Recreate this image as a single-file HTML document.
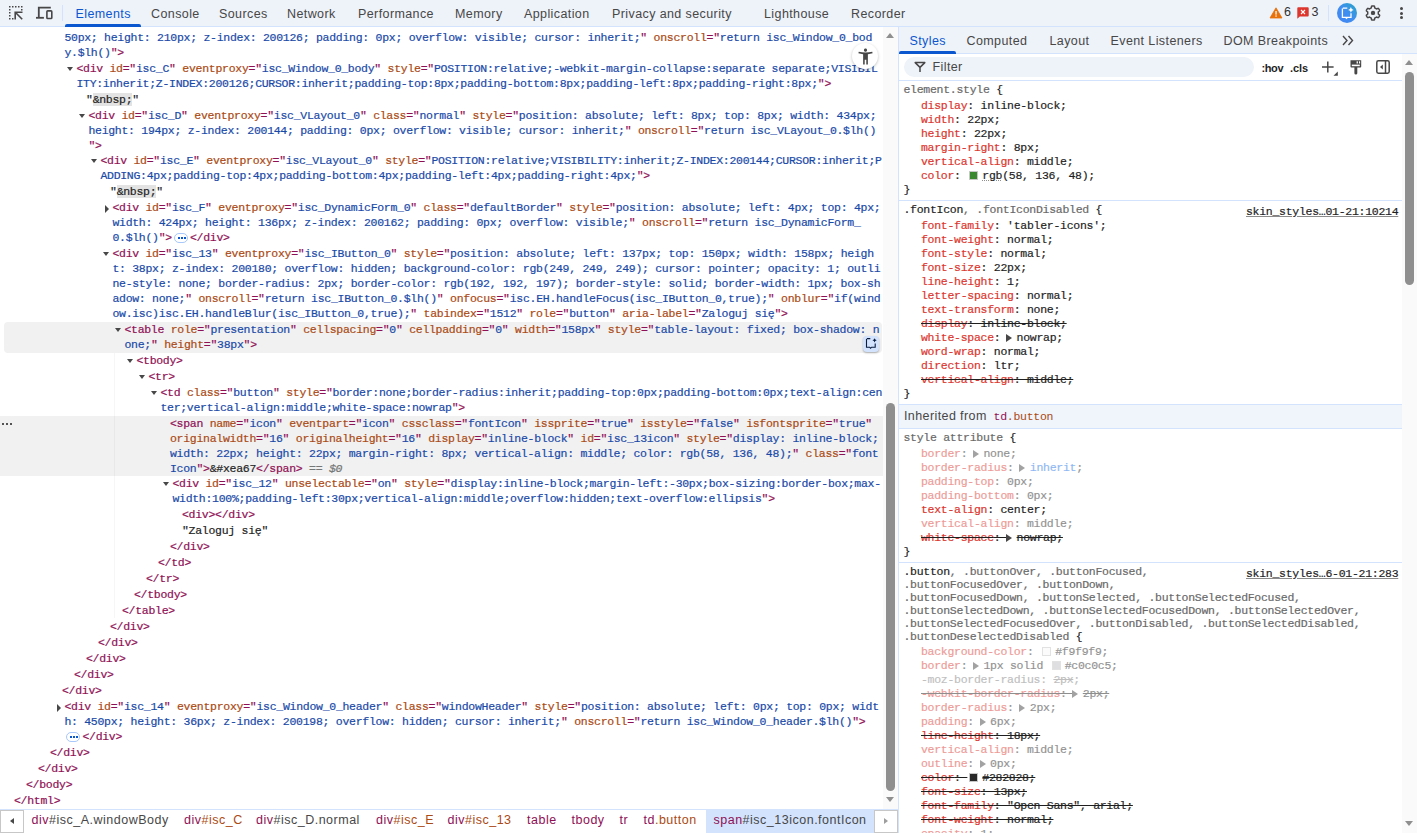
<!DOCTYPE html>
<html><head><meta charset="utf-8"><title>DevTools</title><style>
*{box-sizing:border-box}
html,body{margin:0;padding:0}
body{width:1417px;height:833px;overflow:hidden;position:relative;background:#fff;font-family:"Liberation Sans", sans-serif;color:#1f1f1f}
.abs{position:absolute}
#tb{position:absolute;left:0;top:0;width:1417px;height:27px;background:#eef2f9;border-bottom:1px solid #d3e3fd}
.tab{position:absolute;top:6px;font-size:12.5px;line-height:15px;color:#474747;white-space:nowrap;letter-spacing:0.4px}
#el{position:absolute;left:0;top:27px;width:898px;height:782px;background:#fff;overflow:hidden}
#dom{position:absolute;left:0;top:-27px;width:883px;height:809px}
.ln{position:absolute;white-space:pre;font-family:"Liberation Mono", monospace;font-size:11.5px;line-height:15px;letter-spacing:-0.281px;-webkit-text-stroke:0.2px currentColor}
.t{color:#8f0f55} .a{color:#ab4a14} .v{color:#1a4aa8} .x{color:#1f1f1f}
.nb{background:#e3e3e3;color:#1f1f1f}
.eq{color:#747775} .i{font-style:italic}
.rowbg{position:absolute;left:0;width:883px}
.hov{background:#f1f1f1} .sel{background:#f1f1f1}
.tri-d{position:absolute;width:0;height:0;border-left:3.8px solid transparent;border-right:3.8px solid transparent;border-top:4.8px solid #474747}
.tri-r{position:absolute;width:0;height:0;border-top:4px solid transparent;border-bottom:4px solid transparent;border-left:4.5px solid #474747}
.dots{position:absolute;left:2px;height:2px}
.dots i{position:absolute;top:0;width:2px;height:2px;background:#1f1f1f;border-radius:1px}
.dots i:nth-child(1){left:0} .dots i:nth-child(2){left:4px} .dots i:nth-child(3){left:8px}
.badge{display:inline-block;position:relative;width:14px;height:10px;border:1px solid #a8c7fa;border-radius:5px;vertical-align:-2px;margin:0 2px 0 2px;background:#fff}
.badge b{position:absolute;left:3px;top:3px;width:2px;height:2px;background:#0b57d0;box-shadow:3px 0 0 #0b57d0,6px 0 0 #0b57d0}
#vs{position:absolute;left:883px;top:27px;width:15px;height:782px;background:#fafafa}
.thumb{position:absolute;background:#8f8f8f;border-radius:4.5px}
.arr-u{position:absolute;width:0;height:0;border-left:4.7px solid transparent;border-right:4.7px solid transparent;border-bottom:5px solid #8f8f8f}
.arr-d{position:absolute;width:0;height:0;border-left:4.7px solid transparent;border-right:4.7px solid transparent;border-top:5px solid #8f8f8f}
#bc{position:absolute;left:0;top:809px;width:898px;height:24px;background:#fff;border-top:1px solid #d3e3fd}
.crumb{position:absolute;top:3px;font-size:12.5px;line-height:15px;white-space:nowrap;color:#474747;letter-spacing:0.5px}
#sb{position:absolute;left:898px;top:27px;width:519px;height:806px;border-left:1px solid #d3e3fd;background:#fff}
.ss{position:absolute;white-space:pre;font-family:"Liberation Mono", monospace;font-size:11.5px;line-height:14px;letter-spacing:-0.281px;-webkit-text-stroke:0.2px currentColor;color:#1f1f1f}
.pn{color:#dc362e} .sel-g{color:#5f6368}
.fade{opacity:.5}
.strike{text-decoration:line-through}

.arrow{display:inline-block;width:0;height:0;border-top:4px solid transparent;border-bottom:4px solid transparent;border-left:6.5px solid #474747;margin:0 4.5px 0 -1px;vertical-align:-0.5px}
.sw{display:inline-block;width:9px;height:9px;border:1px solid #c7c7c7;margin:0 4px 0 2px;vertical-align:-1px}
.dotu{text-decoration:underline dotted #8f8f8f}
.src{text-decoration:underline;text-decoration-color:#8a8a8a;color:#1f1f1f}
.monoi{font-family:"Liberation Mono", monospace;font-size:11.5px;letter-spacing:-0.281px}
b.m{font-weight:normal;color:#1f1f1f}
</style></head>
<body>
<div id="tb">
<svg class="abs" style="left:8px;top:5px" width="16" height="16" viewBox="0 0 16 16">
<g fill="#474747"><rect x="1" y="1" width="1.5" height="1.5"/><rect x="4" y="1" width="1.5" height="1.5"/><rect x="7" y="1" width="1.5" height="1.5"/><rect x="10" y="1" width="1.5" height="1.5"/><rect x="13" y="1" width="1.5" height="1.5"/>
<rect x="1" y="4" width="1.5" height="1.5"/><rect x="1" y="7" width="1.5" height="1.5"/><rect x="1" y="10" width="1.5" height="1.5"/><rect x="1" y="13" width="1.5" height="1.5"/><rect x="4" y="13" width="1.5" height="1.5"/><rect x="13" y="4" width="1.5" height="1.5"/></g>
<path d="M7.2 14.5V7.2H14.5M7.5 7.5L14.2 14.2" stroke="#474747" stroke-width="1.6" fill="none"/></svg>
<svg class="abs" style="left:35px;top:5px" width="18" height="16" viewBox="0 0 18 16">
<path d="M3.8 12.8V2.7H15.8" stroke="#474747" stroke-width="1.8" fill="none"/><path d="M1 12.8H8.9" stroke="#474747" stroke-width="1.8"/>
<rect x="11.9" y="5.9" width="4.9" height="7.6" rx="0.8" stroke="#474747" stroke-width="1.6" fill="none"/></svg>
<div class="abs" style="left:62px;top:5px;width:1px;height:16px;background:#d3e3fd"></div>
<div class="tab" style="left:75.5px;top:7px;color:#0b57d0">Elements</div>
<div class="tab" style="left:151px;top:7px">Console</div>
<div class="tab" style="left:219px;top:7px">Sources</div>
<div class="tab" style="left:287px;top:7px">Network</div>
<div class="tab" style="left:358px;top:7px">Performance</div>
<div class="tab" style="left:455px;top:7px">Memory</div>
<div class="tab" style="left:524px;top:7px">Application</div>
<div class="tab" style="left:612px;top:7px">Privacy and security</div>
<div class="tab" style="left:764px;top:7px">Lighthouse</div>
<div class="tab" style="left:851px;top:7px">Recorder</div>
<div class="abs" style="left:65px;top:24px;width:76px;height:3px;background:#0b57d0;border-radius:2px 2px 0 0"></div>
<svg class="abs" style="left:1269px;top:7px" width="14" height="12" viewBox="0 0 14 12"><path d="M7 0.8L13 11H1Z" fill="#e8710a" stroke="#e8710a" stroke-width="0.8" stroke-linejoin="round"/><rect x="6.4" y="4" width="1.3" height="3.6" fill="#fff"/><rect x="6.4" y="8.4" width="1.3" height="1.3" fill="#fff"/></svg>
<div class="tab" style="left:1284px;top:5px;color:#333;font-size:12.5px">6</div>
<svg class="abs" style="left:1297px;top:7px" width="12" height="12" viewBox="0 0 12 12"><path d="M1.2 0.3H10.8Q11.7 0.3 11.7 1.2V8.6Q11.7 9.5 10.8 9.5H2.8L0.3 11.7V1.2Q0.3 0.3 1.2 0.3Z" fill="#dc362e"/><path d="M4 3L8 7M8 3L4 7" stroke="#fff" stroke-width="1.1"/></svg>
<div class="tab" style="left:1311.5px;top:5px;color:#333;font-size:12.5px">3</div>
<div class="abs" style="left:1328px;top:5px;width:1px;height:16px;background:#d3e3fd"></div>
<svg class="abs" style="left:1337px;top:3px" width="20" height="20" viewBox="0 0 20 20"><defs><linearGradient id="g1" x1="0" y1="1" x2="1" y2="0"><stop offset="0" stop-color="#4285f4"/><stop offset="0.5" stop-color="#3f8ef0"/><stop offset="1" stop-color="#27a6c3"/></linearGradient></defs>
<circle cx="10" cy="10" r="10" fill="url(#g1)"/><path d="M5.8 5.1H10.3M5.4 5.4V14.4H14V10.2" stroke="#fff" stroke-width="1.3" fill="none"/><path d="M7.6 14.2H11.4L9.5 16.2Z" fill="#fff"/><path d="M13.9 4L14.8 6L16.7 6.9L14.8 7.8L13.9 9.8L13 7.8L11.1 6.9L13 6Z" fill="#fff"/></svg>
<svg class="abs" style="left:1365px;top:5px" width="16" height="16" viewBox="0 0 16 16"><path d="M13.30 8.00 L13.30 8.09 L13.30 8.18 L13.29 8.28 L13.29 8.37 L13.28 8.46 L13.27 8.55 L13.26 8.65 L13.25 8.74 L13.23 8.83 L13.22 8.92 L13.23 9.02 L13.33 9.13 L13.51 9.27 L13.74 9.43 L13.99 9.60 L14.24 9.79 L14.45 9.97 L14.61 10.15 L14.68 10.30 L14.67 10.43 L14.63 10.54 L14.58 10.66 L14.54 10.77 L14.49 10.89 L14.43 11.00 L14.38 11.11 L14.33 11.22 L14.27 11.33 L14.21 11.44 L14.15 11.55 L14.09 11.66 L14.02 11.76 L13.95 11.87 L13.89 11.97 L13.82 12.07 L13.74 12.17 L13.67 12.27 L13.59 12.37 L13.52 12.47 L13.44 12.56 L13.34 12.64 L13.16 12.65 L12.94 12.60 L12.67 12.51 L12.38 12.38 L12.11 12.25 L11.85 12.13 L11.65 12.05 L11.50 12.02 L11.41 12.06 L11.34 12.12 L11.26 12.18 L11.19 12.23 L11.12 12.29 L11.04 12.34 L10.96 12.39 L10.89 12.44 L10.81 12.49 L10.73 12.54 L10.65 12.59 L10.57 12.64 L10.49 12.68 L10.41 12.72 L10.32 12.76 L10.24 12.80 L10.16 12.84 L10.07 12.88 L9.99 12.91 L9.90 12.95 L9.81 12.98 L9.74 13.04 L9.68 13.18 L9.65 13.41 L9.63 13.68 L9.60 13.99 L9.57 14.30 L9.52 14.57 L9.44 14.80 L9.35 14.94 L9.23 14.99 L9.11 15.01 L8.99 15.03 L8.87 15.05 L8.74 15.06 L8.62 15.07 L8.50 15.08 L8.37 15.09 L8.25 15.10 L8.12 15.10 L8.00 15.10 L7.88 15.10 L7.75 15.10 L7.63 15.09 L7.50 15.08 L7.38 15.07 L7.26 15.06 L7.13 15.05 L7.01 15.03 L6.89 15.01 L6.77 14.99 L6.65 14.94 L6.56 14.80 L6.48 14.57 L6.43 14.30 L6.40 13.99 L6.37 13.68 L6.35 13.41 L6.32 13.18 L6.26 13.04 L6.19 12.98 L6.10 12.95 L6.01 12.91 L5.93 12.88 L5.84 12.84 L5.76 12.80 L5.68 12.76 L5.59 12.72 L5.51 12.68 L5.43 12.64 L5.35 12.59 L5.27 12.54 L5.19 12.49 L5.11 12.44 L5.04 12.39 L4.96 12.34 L4.88 12.29 L4.81 12.23 L4.74 12.18 L4.66 12.12 L4.59 12.06 L4.50 12.02 L4.35 12.05 L4.15 12.13 L3.89 12.25 L3.62 12.38 L3.33 12.51 L3.06 12.60 L2.84 12.65 L2.66 12.64 L2.56 12.56 L2.48 12.47 L2.41 12.37 L2.33 12.27 L2.26 12.17 L2.18 12.07 L2.11 11.97 L2.05 11.87 L1.98 11.76 L1.91 11.66 L1.85 11.55 L1.79 11.44 L1.73 11.33 L1.67 11.22 L1.62 11.11 L1.57 11.00 L1.51 10.89 L1.46 10.77 L1.42 10.66 L1.37 10.54 L1.33 10.43 L1.32 10.30 L1.39 10.15 L1.55 9.97 L1.76 9.79 L2.01 9.60 L2.26 9.43 L2.49 9.27 L2.67 9.13 L2.77 9.02 L2.78 8.92 L2.77 8.83 L2.75 8.74 L2.74 8.65 L2.73 8.55 L2.72 8.46 L2.71 8.37 L2.71 8.28 L2.70 8.18 L2.70 8.09 L2.70 8.00 L2.70 7.91 L2.70 7.82 L2.71 7.72 L2.71 7.63 L2.72 7.54 L2.73 7.45 L2.74 7.35 L2.75 7.26 L2.77 7.17 L2.78 7.08 L2.77 6.98 L2.67 6.87 L2.49 6.73 L2.26 6.57 L2.01 6.40 L1.76 6.21 L1.55 6.03 L1.39 5.85 L1.32 5.70 L1.33 5.57 L1.37 5.46 L1.42 5.34 L1.46 5.23 L1.51 5.11 L1.57 5.00 L1.62 4.89 L1.67 4.78 L1.73 4.67 L1.79 4.56 L1.85 4.45 L1.91 4.34 L1.98 4.24 L2.05 4.13 L2.11 4.03 L2.18 3.93 L2.26 3.83 L2.33 3.73 L2.41 3.63 L2.48 3.53 L2.56 3.44 L2.66 3.36 L2.84 3.35 L3.06 3.40 L3.33 3.49 L3.62 3.62 L3.89 3.75 L4.15 3.87 L4.35 3.95 L4.50 3.98 L4.59 3.94 L4.66 3.88 L4.74 3.82 L4.81 3.77 L4.88 3.71 L4.96 3.66 L5.04 3.61 L5.11 3.56 L5.19 3.51 L5.27 3.46 L5.35 3.41 L5.43 3.36 L5.51 3.32 L5.59 3.28 L5.68 3.24 L5.76 3.20 L5.84 3.16 L5.93 3.12 L6.01 3.09 L6.10 3.05 L6.19 3.02 L6.26 2.96 L6.32 2.82 L6.35 2.59 L6.37 2.32 L6.40 2.01 L6.43 1.70 L6.48 1.43 L6.56 1.20 L6.65 1.06 L6.77 1.01 L6.89 0.99 L7.01 0.97 L7.13 0.95 L7.26 0.94 L7.38 0.93 L7.50 0.92 L7.63 0.91 L7.75 0.90 L7.88 0.90 L8.00 0.90 L8.12 0.90 L8.25 0.90 L8.37 0.91 L8.50 0.92 L8.62 0.93 L8.74 0.94 L8.87 0.95 L8.99 0.97 L9.11 0.99 L9.23 1.01 L9.35 1.06 L9.44 1.20 L9.52 1.43 L9.57 1.70 L9.60 2.01 L9.63 2.32 L9.65 2.59 L9.68 2.82 L9.74 2.96 L9.81 3.02 L9.90 3.05 L9.99 3.09 L10.07 3.12 L10.16 3.16 L10.24 3.20 L10.32 3.24 L10.41 3.28 L10.49 3.32 L10.57 3.36 L10.65 3.41 L10.73 3.46 L10.81 3.51 L10.89 3.56 L10.96 3.61 L11.04 3.66 L11.12 3.71 L11.19 3.77 L11.26 3.82 L11.34 3.88 L11.41 3.94 L11.50 3.98 L11.65 3.95 L11.85 3.87 L12.11 3.75 L12.38 3.62 L12.67 3.49 L12.94 3.40 L13.16 3.35 L13.34 3.36 L13.44 3.44 L13.52 3.53 L13.59 3.63 L13.67 3.73 L13.74 3.83 L13.82 3.93 L13.89 4.03 L13.95 4.13 L14.02 4.24 L14.09 4.34 L14.15 4.45 L14.21 4.56 L14.27 4.67 L14.33 4.78 L14.38 4.89 L14.43 5.00 L14.49 5.11 L14.54 5.23 L14.58 5.34 L14.63 5.46 L14.67 5.57 L14.68 5.70 L14.61 5.85 L14.45 6.03 L14.24 6.21 L13.99 6.40 L13.74 6.57 L13.51 6.73 L13.33 6.87 L13.23 6.98 L13.22 7.08 L13.23 7.17 L13.25 7.26 L13.26 7.35 L13.27 7.45 L13.28 7.54 L13.29 7.63 L13.29 7.72 L13.30 7.82 L13.30 7.91Z" fill="none" stroke="#474747" stroke-width="1.45" stroke-linejoin="round"/><circle cx="8" cy="7.9" r="2.2" fill="#474747"/></svg>
<div class="abs" style="left:1399.6px;top:7px"><div style="position:absolute;left:0;top:0;width:3px;height:3px;border-radius:2px;background:#474747"></div><div style="position:absolute;left:0;top:4.6px;width:3px;height:3px;border-radius:2px;background:#474747"></div><div style="position:absolute;left:0;top:9.2px;width:3px;height:3px;border-radius:2px;background:#474747"></div></div>
</div>
<div id="el"><div id="dom">
<div class="ln" style="left:64.4px;top:30.0px"><span class="v">50px; height: 210px; z-index: 200126; padding: 0px; overflow: visible; cursor: inherit;</span><span class="t">"</span><span class="x"> </span><span class="a">onscroll</span><span class="t">="</span><span class="v">return isc_Window_0_bod</span></div>
<div class="ln" style="left:64.4px;top:45.0px"><span class="v">y.$lh()</span><span class="t">"&gt;</span></div>
<div class="tri-d" style="left:67.0px;top:67.4px"></div>
<div class="ln" style="left:76.4px;top:61.0px"><span class="t">&lt;div</span><span class="x"> </span><span class="a">id</span><span class="t">="</span><span class="v">isc_C</span><span class="t">"</span><span class="x"> </span><span class="a">eventproxy</span><span class="t">="</span><span class="v">isc_Window_0_body</span><span class="t">"</span><span class="x"> </span><span class="a">style</span><span class="t">="</span><span class="v">POSITION:relative;-webkit-margin-collapse:separate separate;VISIBIL</span></div>
<div class="ln" style="left:76.4px;top:76.0px"><span class="v">ITY:inherit;Z-INDEX:200126;CURSOR:inherit;padding-top:8px;padding-bottom:8px;padding-left:8px;padding-right:8px;</span><span class="t">"&gt;</span></div>
<div class="ln" style="left:86.0px;top:92.0px"><span class="x">"</span><span class="nb">&amp;nbsp;</span><span class="x">"</span></div>
<div class="tri-d" style="left:79.0px;top:114.4px"></div>
<div class="ln" style="left:88.4px;top:108.0px"><span class="t">&lt;div</span><span class="x"> </span><span class="a">id</span><span class="t">="</span><span class="v">isc_D</span><span class="t">"</span><span class="x"> </span><span class="a">eventproxy</span><span class="t">="</span><span class="v">isc_VLayout_0</span><span class="t">"</span><span class="x"> </span><span class="a">class</span><span class="t">="</span><span class="v">normal</span><span class="t">"</span><span class="x"> </span><span class="a">style</span><span class="t">="</span><span class="v">position: absolute; left: 8px; top: 8px; width: 434px;</span></div>
<div class="ln" style="left:88.4px;top:123.0px"><span class="v">height: 194px; z-index: 200144; padding: 0px; overflow: visible; cursor: inherit;</span><span class="t">"</span><span class="x"> </span><span class="a">onscroll</span><span class="t">="</span><span class="v">return isc_VLayout_0.$lh()</span></div>
<div class="ln" style="left:88.4px;top:138.0px"><span class="t">"&gt;</span></div>
<div class="tri-d" style="left:91.0px;top:159.4px"></div>
<div class="ln" style="left:100.4px;top:153.0px"><span class="t">&lt;div</span><span class="x"> </span><span class="a">id</span><span class="t">="</span><span class="v">isc_E</span><span class="t">"</span><span class="x"> </span><span class="a">eventproxy</span><span class="t">="</span><span class="v">isc_VLayout_0</span><span class="t">"</span><span class="x"> </span><span class="a">style</span><span class="t">="</span><span class="v">POSITION:relative;VISIBILITY:inherit;Z-INDEX:200144;CURSOR:inherit;P</span></div>
<div class="ln" style="left:100.4px;top:168.0px"><span class="v">ADDING:4px;padding-top:4px;padding-bottom:4px;padding-left:4px;padding-right:4px;</span><span class="t">"&gt;</span></div>
<div class="ln" style="left:110.0px;top:184.0px"><span class="x">"</span><span class="nb">&amp;nbsp;</span><span class="x">"</span></div>
<div class="tri-r" style="left:104.8px;top:204.7px"></div>
<div class="ln" style="left:112.4px;top:200.0px"><span class="t">&lt;div</span><span class="x"> </span><span class="a">id</span><span class="t">="</span><span class="v">isc_F</span><span class="t">"</span><span class="x"> </span><span class="a">eventproxy</span><span class="t">="</span><span class="v">isc_DynamicForm_0</span><span class="t">"</span><span class="x"> </span><span class="a">class</span><span class="t">="</span><span class="v">defaultBorder</span><span class="t">"</span><span class="x"> </span><span class="a">style</span><span class="t">="</span><span class="v">position: absolute; left: 4px; top: 4px;</span></div>
<div class="ln" style="left:112.4px;top:215.0px"><span class="v">width: 424px; height: 136px; z-index: 200162; padding: 0px; overflow: visible;</span><span class="t">"</span><span class="x"> </span><span class="a">onscroll</span><span class="t">="</span><span class="v">return isc_DynamicForm_</span></div>
<div class="ln" style="left:112.4px;top:230.0px"><span class="v">0.$lh()</span><span class="t">"&gt;</span><span class="badge"><b></b></span><span class="t">&lt;/div&gt;</span></div>
<div class="tri-d" style="left:103.0px;top:252.4px"></div>
<div class="ln" style="left:112.4px;top:246.0px"><span class="t">&lt;div</span><span class="x"> </span><span class="a">id</span><span class="t">="</span><span class="v">isc_13</span><span class="t">"</span><span class="x"> </span><span class="a">eventproxy</span><span class="t">="</span><span class="v">isc_IButton_0</span><span class="t">"</span><span class="x"> </span><span class="a">style</span><span class="t">="</span><span class="v">position: absolute; left: 137px; top: 150px; width: 158px; heigh</span></div>
<div class="ln" style="left:112.4px;top:261.0px"><span class="v">t: 38px; z-index: 200180; overflow: hidden; background-color: rgb(249, 249, 249); cursor: pointer; opacity: 1; outli</span></div>
<div class="ln" style="left:112.4px;top:276.0px"><span class="v">ne-style: none; border-radius: 2px; border-color: rgb(192, 192, 197); border-style: solid; border-width: 1px; box-sh</span></div>
<div class="ln" style="left:112.4px;top:291.0px"><span class="v">adow: none;</span><span class="t">"</span><span class="x"> </span><span class="a">onscroll</span><span class="t">="</span><span class="v">return isc_IButton_0.$lh()</span><span class="t">"</span><span class="x"> </span><span class="a">onfocus</span><span class="t">="</span><span class="v">isc.EH.handleFocus(isc_IButton_0,true);</span><span class="t">"</span><span class="x"> </span><span class="a">onblur</span><span class="t">="</span><span class="v">if(wind</span></div>
<div class="ln" style="left:112.4px;top:306.0px"><span class="v">ow.isc)isc.EH.handleBlur(isc_IButton_0,true);</span><span class="t">"</span><span class="x"> </span><span class="a">tabindex</span><span class="t">="</span><span class="v">1512</span><span class="t">"</span><span class="x"> </span><span class="a">role</span><span class="t">="</span><span class="v">button</span><span class="t">"</span><span class="x"> </span><span class="a">aria-label</span><span class="t">="</span><span class="v">Zaloguj się</span><span class="t">"&gt;</span></div>
<div class="rowbg hov" style="top:322px;height:31px;left:4px;width:878px;border-radius:4px"></div>
<div class="tri-d" style="left:115.0px;top:328.4px"></div>
<div class="ln" style="left:124.4px;top:322.0px"><span class="t">&lt;table</span><span class="x"> </span><span class="a">role</span><span class="t">="</span><span class="v">presentation</span><span class="t">"</span><span class="x"> </span><span class="a">cellspacing</span><span class="t">="</span><span class="v">0</span><span class="t">"</span><span class="x"> </span><span class="a">cellpadding</span><span class="t">="</span><span class="v">0</span><span class="t">"</span><span class="x"> </span><span class="a">width</span><span class="t">="</span><span class="v">158px</span><span class="t">"</span><span class="x"> </span><span class="a">style</span><span class="t">="</span><span class="v">table-layout: fixed; box-shadow: n</span></div>
<div class="ln" style="left:124.4px;top:337.0px"><span class="v">one;</span><span class="t">"</span><span class="x"> </span><span class="a">height</span><span class="t">="</span><span class="v">38px</span><span class="t">"&gt;</span></div>
<div class="tri-d" style="left:127.0px;top:359.4px"></div>
<div class="ln" style="left:136.4px;top:353.0px"><span class="t">&lt;tbody&gt;</span></div>
<div class="tri-d" style="left:139.0px;top:375.4px"></div>
<div class="ln" style="left:148.4px;top:369.0px"><span class="t">&lt;tr&gt;</span></div>
<div class="tri-d" style="left:151.0px;top:391.4px"></div>
<div class="ln" style="left:160.4px;top:385.0px"><span class="t">&lt;td</span><span class="x"> </span><span class="a">class</span><span class="t">="</span><span class="v">button</span><span class="t">"</span><span class="x"> </span><span class="a">style</span><span class="t">="</span><span class="v">border:none;border-radius:inherit;padding-top:0px;padding-bottom:0px;text-align:cen</span></div>
<div class="ln" style="left:160.4px;top:400.0px"><span class="v">ter;vertical-align:middle;white-space:nowrap</span><span class="t">"&gt;</span></div>
<div class="rowbg sel" style="top:416px;height:60px"></div>
<div class="dots" style="top:423px"><i></i><i></i><i></i></div>
<div class="ln" style="left:170.0px;top:416.0px"><span class="t">&lt;span</span><span class="x"> </span><span class="a">name</span><span class="t">="</span><span class="v">icon</span><span class="t">"</span><span class="x"> </span><span class="a">eventpart</span><span class="t">="</span><span class="v">icon</span><span class="t">"</span><span class="x"> </span><span class="a">cssclass</span><span class="t">="</span><span class="v">fontIcon</span><span class="t">"</span><span class="x"> </span><span class="a">issprite</span><span class="t">="</span><span class="v">true</span><span class="t">"</span><span class="x"> </span><span class="a">isstyle</span><span class="t">="</span><span class="v">false</span><span class="t">"</span><span class="x"> </span><span class="a">isfontsprite</span><span class="t">="</span><span class="v">true</span><span class="t">"</span></div>
<div class="ln" style="left:170.0px;top:431.0px"><span class="a">originalwidth</span><span class="t">="</span><span class="v">16</span><span class="t">"</span><span class="x"> </span><span class="a">originalheight</span><span class="t">="</span><span class="v">16</span><span class="t">"</span><span class="x"> </span><span class="a">display</span><span class="t">="</span><span class="v">inline-block</span><span class="t">"</span><span class="x"> </span><span class="a">id</span><span class="t">="</span><span class="v">isc_13icon</span><span class="t">"</span><span class="x"> </span><span class="a">style</span><span class="t">="</span><span class="v">display: inline-block;</span></div>
<div class="ln" style="left:170.0px;top:446.0px"><span class="v">width: 22px; height: 22px; margin-right: 8px; vertical-align: middle; color: rgb(58, 136, 48);</span><span class="t">"</span><span class="x"> </span><span class="a">class</span><span class="t">="</span><span class="v">font</span></div>
<div class="ln" style="left:170.0px;top:461.0px"><span class="v">Icon</span><span class="t">"&gt;</span><span class="x">&amp;#xea67</span><span class="t">&lt;/span&gt;</span><span class="eq"> == </span><span class="eq i">$0</span></div>
<div class="tri-d" style="left:163.0px;top:482.4px"></div>
<div class="ln" style="left:172.4px;top:476.0px"><span class="t">&lt;div</span><span class="x"> </span><span class="a">id</span><span class="t">="</span><span class="v">isc_12</span><span class="t">"</span><span class="x"> </span><span class="a">unselectable</span><span class="t">="</span><span class="v">on</span><span class="t">"</span><span class="x"> </span><span class="a">style</span><span class="t">="</span><span class="v">display:inline-block;margin-left:-30px;box-sizing:border-box;max-</span></div>
<div class="ln" style="left:172.4px;top:491.0px"><span class="v">width:100%;padding-left:30px;vertical-align:middle;overflow:hidden;text-overflow:ellipsis</span><span class="t">"&gt;</span></div>
<div class="ln" style="left:182.0px;top:507.0px"><span class="t">&lt;div&gt;&lt;/div&gt;</span></div>
<div class="ln" style="left:182.0px;top:523.0px"><span class="x">"Zaloguj się"</span></div>
<div class="ln" style="left:170.0px;top:539.0px"><span class="t">&lt;/div&gt;</span></div>
<div class="ln" style="left:158.0px;top:555.0px"><span class="t">&lt;/td&gt;</span></div>
<div class="ln" style="left:146.0px;top:571.0px"><span class="t">&lt;/tr&gt;</span></div>
<div class="ln" style="left:134.0px;top:587.0px"><span class="t">&lt;/tbody&gt;</span></div>
<div class="ln" style="left:122.0px;top:603.0px"><span class="t">&lt;/table&gt;</span></div>
<div class="ln" style="left:110.0px;top:619.0px"><span class="t">&lt;/div&gt;</span></div>
<div class="ln" style="left:98.0px;top:635.0px"><span class="t">&lt;/div&gt;</span></div>
<div class="ln" style="left:86.0px;top:651.0px"><span class="t">&lt;/div&gt;</span></div>
<div class="ln" style="left:74.0px;top:667.0px"><span class="t">&lt;/div&gt;</span></div>
<div class="ln" style="left:62.0px;top:683.0px"><span class="t">&lt;/div&gt;</span></div>
<div class="tri-r" style="left:56.8px;top:703.7px"></div>
<div class="ln" style="left:64.4px;top:699.0px"><span class="t">&lt;div</span><span class="x"> </span><span class="a">id</span><span class="t">="</span><span class="v">isc_14</span><span class="t">"</span><span class="x"> </span><span class="a">eventproxy</span><span class="t">="</span><span class="v">isc_Window_0_header</span><span class="t">"</span><span class="x"> </span><span class="a">class</span><span class="t">="</span><span class="v">windowHeader</span><span class="t">"</span><span class="x"> </span><span class="a">style</span><span class="t">="</span><span class="v">position: absolute; left: 0px; top: 0px; widt</span></div>
<div class="ln" style="left:64.4px;top:714.0px"><span class="v">h: 450px; height: 36px; z-index: 200198; overflow: hidden; cursor: inherit;</span><span class="t">"</span><span class="x"> </span><span class="a">onscroll</span><span class="t">="</span><span class="v">return isc_Window_0_header.$lh()</span><span class="t">"&gt;</span></div>
<div class="ln" style="left:64.4px;top:729.0px"><span class="badge"><b></b></span><span class="t">&lt;/div&gt;</span></div>
<div class="ln" style="left:50.0px;top:745.0px"><span class="t">&lt;/div&gt;</span></div>
<div class="ln" style="left:38.0px;top:761.0px"><span class="t">&lt;/div&gt;</span></div>
<div class="ln" style="left:26.0px;top:777.0px"><span class="t">&lt;/body&gt;</span></div>
<div class="ln" style="left:14.0px;top:793.0px"><span class="t">&lt;/html&gt;</span></div>
<div class="abs" style="left:114px;top:353px;width:1px;height:265px;background:rgba(0,0,0,0.035)"></div><div class="abs" style="left:852px;top:43px;width:26px;height:26px;border-radius:13px;background:#fff;box-shadow:0 1px 3px rgba(0,0,0,.25)">
<svg class="abs" style="left:3.5px;top:3.5px" width="19" height="19" viewBox="0 0 24 24"><path fill="#474747" d="M20.5 6c-2.61.7-5.67 1-8.5 1s-5.89-.3-8.5-1L3 8c1.86.5 4 .83 6 1v13h2v-6h2v6h2V9c2-.17 4.14-.5 6-1l-.5-2zM12 6c1.1 0 2-.9 2-2s-.9-2-2-2-2 .9-2 2 .9 2 2 2z"/></svg></div><div class="abs" style="left:863px;top:336px;width:16px;height:16px;border-radius:4px;background:#d3e3fd;box-shadow:0 1px 2px rgba(0,0,0,.3)">
<svg class="abs" style="left:0;top:0" width="16" height="16" viewBox="0 0 16 16"><path d="M3.8 2.6H7.3M3.5 2.9V11.2H6.6L7.6 12.2L8.6 11.2H12.2V7.6" stroke="#0a1d3f" stroke-width="1.1" fill="none"/><path d="M11.6 2.2L12.3 3.6L13.7 4.3L12.3 5L11.6 6.4L10.9 5L9.5 4.3L10.9 3.6Z" fill="#0a1d3f"/></svg></div>
</div></div>
<div id="vs"></div>
<div class="arr-u" style="left:886px;top:33px"></div>
<div class="thumb" style="left:886px;top:403px;width:9px;height:388px"></div>
<div class="arr-d" style="left:886px;top:797px"></div>
<div id="bc">
<div class="abs" style="left:0;top:0;width:24px;height:23px;border:1px solid #c7c7c7;background:#fff"></div>
<div class="abs" style="left:10px;top:8px;width:0;height:0;border-top:3px solid transparent;border-bottom:3px solid transparent;border-right:4px solid #474747"></div>
<div class="abs" style="left:706px;top:0px;width:168px;height:24px;background:#d3e3fd"></div>
<div class="crumb" style="left:31.5px"><span style="color:#8f0f55">div</span><span style="color:#474747">#isc_A.windowBody</span></div>
<div class="crumb" style="left:184px"><span style="color:#8f0f55">div</span><span style="color:#ab4a14">#isc_C</span></div>
<div class="crumb" style="left:256px"><span style="color:#8f0f55">div</span><span style="color:#474747">#isc_D.normal</span></div>
<div class="crumb" style="left:376px"><span style="color:#8f0f55">div</span><span style="color:#ab4a14">#isc_E</span></div>
<div class="crumb" style="left:447.5px"><span style="color:#8f0f55">div</span><span style="color:#ab4a14">#isc_13</span></div>
<div class="crumb" style="left:527px"><span style="color:#8f0f55">table</span></div>
<div class="crumb" style="left:571.5px"><span style="color:#8f0f55">tbody</span></div>
<div class="crumb" style="left:619.5px"><span style="color:#8f0f55">tr</span></div>
<div class="crumb" style="left:643.5px"><span style="color:#8f0f55">td</span><span style="color:#ab4a14">.button</span></div>
<div class="crumb" style="left:713.5px"><span style="color:#8f0f55">span</span><span style="color:#474747">#isc_13icon.fontIcon</span></div>
<div class="abs" style="left:874px;top:0;width:24px;height:23px;border:1px solid #c7c7c7;background:#fff"></div>
<div class="abs" style="left:884px;top:8px;width:0;height:0;border-top:3px solid transparent;border-bottom:3px solid transparent;border-left:4px solid #9e9e9e"></div>
</div>
<div class="abs" style="left:898px;top:27px;width:1px;height:806px;background:#d3e3fd"></div>
<div class="abs" style="left:899px;top:27px;width:518px;height:27px;background:#eef2f9;border-bottom:1px solid #d3e3fd"></div>
<div class="tab" style="left:909.5px;top:34px;color:#0b57d0">Styles</div>
<div class="tab" style="left:966.5px;top:34px">Computed</div>
<div class="tab" style="left:1049.5px;top:34px">Layout</div>
<div class="tab" style="left:1110.5px;top:34px">Event Listeners</div>
<div class="tab" style="left:1223.5px;top:34px">DOM Breakpoints</div>
<div class="abs" style="left:899px;top:51px;width:57px;height:3px;background:#0b57d0;border-radius:2px 2px 0 0"></div>
<svg class="abs" style="left:1342px;top:35px" width="12" height="11" viewBox="0 0 12 11"><path d="M1 1L5 5.5L1 10M6.5 1L10.5 5.5L6.5 10" stroke="#474747" stroke-width="1.4" fill="none"/></svg>
<div class="abs" style="left:899px;top:54px;width:503px;height:27px;background:#fff;border-bottom:1px solid #d3e3fd"></div>
<div class="abs" style="left:904px;top:57px;width:350px;height:20px;border-radius:10px;background:#eef2f9"></div>
<svg class="abs" style="left:914px;top:61px" width="12" height="12" viewBox="0 0 12 12"><path d="M1.2 1.6H10.8L6 6.4ZM6 6V11" stroke="#474747" stroke-width="1.5" fill="none" stroke-linejoin="round"/></svg>
<div class="tab" style="left:932.5px;top:60px;color:#474747">Filter</div>
<div class="tab" style="left:1261.5px;top:61px;color:#1f1f1f;font-size:11px;font-weight:bold;letter-spacing:-0.4px">:hov</div>
<div class="tab" style="left:1290px;top:61px;color:#1f1f1f;font-size:11px;font-weight:bold;letter-spacing:-0.1px">.cls</div>
<svg class="abs" style="left:1321px;top:61px" width="18" height="16" viewBox="0 0 18 16"><path d="M6.8 0.5V11.5M1 6H12.6" stroke="#474747" stroke-width="1.5"/><path d="M16.8 10.5V14.8H12.5Z" fill="#474747"/></svg>
<svg class="abs" style="left:1349px;top:59px" width="14" height="16" viewBox="0 0 14 16"><path d="M1.5 1.2H12.2V7.8Q12.2 8.6 11.4 8.6H8.3V14.2Q8.3 15.4 6.85 15.4Q5.4 15.4 5.4 14.2V8.6H2.3Q1.5 8.6 1.5 7.8Z" fill="#474747"/><rect x="2.8" y="5.6" width="8" height="1.6" fill="#fff"/><rect x="7.6" y="2.3" width="1.3" height="2.2" fill="#fff"/><rect x="10" y="2.3" width="1.1" height="2.2" fill="#fff"/></svg>
<svg class="abs" style="left:1375px;top:59px" width="16" height="16" viewBox="0 0 16 16"><rect x="1.8" y="1.8" width="12.4" height="12.4" rx="1.6" stroke="#474747" stroke-width="1.5" fill="none"/><path d="M10.5 2V14" stroke="#474747" stroke-width="1.5"/><path d="M7.8 5.5V10.5L5 8Z" fill="#474747"/></svg>
<div class="abs" style="left:1402px;top:54px;width:15px;height:779px;background:#fafafa"></div>
<div class="arr-u" style="left:1405px;top:60px"></div>
<div class="thumb" style="left:1405px;top:72px;width:9px;height:213px"></div>
<div class="arr-d" style="left:1405px;top:821px"></div>
<div class="ss" style="left:903.5px;top:83px;"><span style="color:#6a6a6a">element.style</span> {</div>
<div class="ss" style="left:921px;top:99px;"><span class="pn">display</span>: inline-block;</div>
<div class="ss" style="left:921px;top:113px;"><span class="pn">width</span>: 22px;</div>
<div class="ss" style="left:921px;top:127px;"><span class="pn">height</span>: 22px;</div>
<div class="ss" style="left:921px;top:141px;"><span class="pn">margin-right</span>: 8px;</div>
<div class="ss" style="left:921px;top:155px;"><span class="pn">vertical-align</span>: middle;</div>
<div class="ss" style="left:921px;top:169px;"><span class="pn">color</span>: <span class="sw" style="background:rgb(58,136,48)"></span><span class="dotu">rgb</span>(58, 136, 48);</div>
<div class="ss" style="left:903.5px;top:183px;">}</div>
<div class="abs" style="left:899px;top:200px;width:503px;height:1px;background:#d3e3fd"></div>
<div class="ss" style="left:903.5px;top:203px;">.fontIcon<span style="color:#6a6a6a">, .fontIconDisabled</span> {</div>
<div class="ss src" style="left:1246px;top:205px">skin_styles…01-21:10214</div>
<div class="ss" style="left:921px;top:219px;"><span class="pn">font-family</span>: 'tabler-icons';</div>
<div class="ss" style="left:921px;top:233px;"><span class="pn">font-weight</span>: normal;</div>
<div class="ss" style="left:921px;top:247px;"><span class="pn">font-style</span>: normal;</div>
<div class="ss" style="left:921px;top:261px;"><span class="pn">font-size</span>: 22px;</div>
<div class="ss" style="left:921px;top:275px;"><span class="pn">line-height</span>: 1;</div>
<div class="ss" style="left:921px;top:289px;"><span class="pn">letter-spacing</span>: normal;</div>
<div class="ss" style="left:921px;top:303px;"><span class="pn">text-transform</span>: none;</div>
<div class="ss" style="left:921px;top:317px;"><span class="strike"><span class="pn">display</span>: inline-block;</span></div>
<div class="ss" style="left:921px;top:331px;"><span class="pn">white-space</span>: <span class="arrow"></span>nowrap;</div>
<div class="ss" style="left:921px;top:345px;"><span class="pn">word-wrap</span>: normal;</div>
<div class="ss" style="left:921px;top:359px;"><span class="pn">direction</span>: ltr;</div>
<div class="ss" style="left:921px;top:373px;"><span class="strike"><span class="pn">vertical-align</span>: middle;</span></div>
<div class="ss" style="left:903.5px;top:387px;">}</div>
<div class="abs" style="left:899px;top:404px;width:503px;height:25px;background:#f0f4fb;border-top:1px solid #d3e3fd;border-bottom:1px solid #d3e3fd"></div>
<div class="tab" style="left:904px;top:409px;color:#474747;font-size:12.5px">Inherited from <span class="monoi" style="margin-left:3px"><span style="color:#8f0f55">td</span><span style="color:#ab4a14">.button</span></span></div>
<div class="ss" style="left:903.5px;top:431px;"><span style="color:#6a6a6a">style attribute</span> {</div>
<div class="ss" style="left:921px;top:447px;"><span class="fade"><span class="pn">border</span>: <span class="arrow"></span>none;</span></div>
<div class="ss" style="left:921px;top:461px;"><span class="fade"><span class="pn">border-radius</span>: <span class="arrow"></span><span style="color:#1a73e8">inherit</span>;</span></div>
<div class="ss" style="left:921px;top:475px;"><span class="fade"><span class="pn">padding-top</span>: 0px;</span></div>
<div class="ss" style="left:921px;top:489px;"><span class="fade"><span class="pn">padding-bottom</span>: 0px;</span></div>
<div class="ss" style="left:921px;top:503px;"><span class="pn">text-align</span>: center;</div>
<div class="ss" style="left:921px;top:517px;"><span class="fade"><span class="pn">vertical-align</span>: middle;</span></div>
<div class="ss" style="left:921px;top:531px;"><span class="strike"><span class="pn">white-space</span>: <span class="arrow"></span>nowrap;</span></div>
<div class="ss" style="left:903.5px;top:545px;">}</div>
<div class="abs" style="left:899px;top:562px;width:503px;height:1px;background:#d3e3fd"></div>
<div class="ss" style="left:903.5px;top:565px;line-height:13px;color:#6a6a6a"><b class="m">.button</b>, .buttonOver, .buttonFocused,</div>
<div class="ss" style="left:903.5px;top:578px;line-height:13px;color:#6a6a6a">.buttonFocusedOver, .buttonDown,</div>
<div class="ss" style="left:903.5px;top:591px;line-height:13px;color:#6a6a6a">.buttonFocusedDown, .buttonSelected, .buttonSelectedFocused,</div>
<div class="ss" style="left:903.5px;top:604px;line-height:13px;color:#6a6a6a">.buttonSelectedDown, .buttonSelectedFocusedDown, .buttonSelectedOver,</div>
<div class="ss" style="left:903.5px;top:617px;line-height:13px;color:#6a6a6a">.buttonSelectedFocusedOver, .buttonDisabled, .buttonSelectedDisabled,</div>
<div class="ss" style="left:903.5px;top:630px;line-height:13px;color:#6a6a6a">.buttonDeselectedDisabled <span style="color:#1f1f1f">{</span></div>
<div class="ss src" style="left:1246px;top:567px">skin_styles…6-01-21:283</div>
<div class="ss" style="left:921px;top:645px;"><span class="fade"><span class="pn">background-color</span>: <span class="sw" style="background:#f9f9f9"></span>#f9f9f9;</span></div>
<div class="ss" style="left:921px;top:659px;"><span class="fade"><span class="pn">border</span>: <span class="arrow"></span>1px solid <span class="sw" style="background:#c0c0c5"></span>#c0c0c5;</span></div>
<div class="ss" style="left:921px;top:673px;"><span style="opacity:.35;color:#474747"><span style="color:#474747">-moz-border-radius</span>: <span class="strike">2px</span>;</span></div>
<div class="ss" style="left:921px;top:687px;"><span class="fade"><span class="strike"><span class="pn">-webkit-border-radius</span>: <span class="arrow"></span>2px;</span></span></div>
<div class="ss" style="left:921px;top:701px;"><span class="fade"><span class="pn">border-radius</span>: <span class="arrow"></span>2px;</span></div>
<div class="ss" style="left:921px;top:715px;"><span class="fade"><span class="pn">padding</span>: <span class="arrow"></span>6px;</span></div>
<div class="ss" style="left:921px;top:729px;"><span class="strike"><span class="pn">line-height</span>: 18px;</span></div>
<div class="ss" style="left:921px;top:743px;"><span class="fade"><span class="pn">vertical-align</span>: middle;</span></div>
<div class="ss" style="left:921px;top:757px;"><span class="fade"><span class="pn">outline</span>: <span class="arrow"></span>0px;</span></div>
<div class="ss" style="left:921px;top:771px;"><span class="strike"><span class="pn">color</span>: <span class="sw" style="background:#282828"></span>#282828;</span></div>
<div class="ss" style="left:921px;top:785px;"><span class="strike"><span class="pn">font-size</span>: 13px;</span></div>
<div class="ss" style="left:921px;top:799px;"><span class="strike"><span class="pn">font-family</span>: "Open Sans", arial;</span></div>
<div class="ss" style="left:921px;top:813px;"><span class="strike"><span class="pn">font-weight</span>: normal;</span></div>
<div class="ss" style="left:921px;top:827px;"><span class="fade"><span class="pn">opacity</span>: 1;</span></div>
</body></html>
